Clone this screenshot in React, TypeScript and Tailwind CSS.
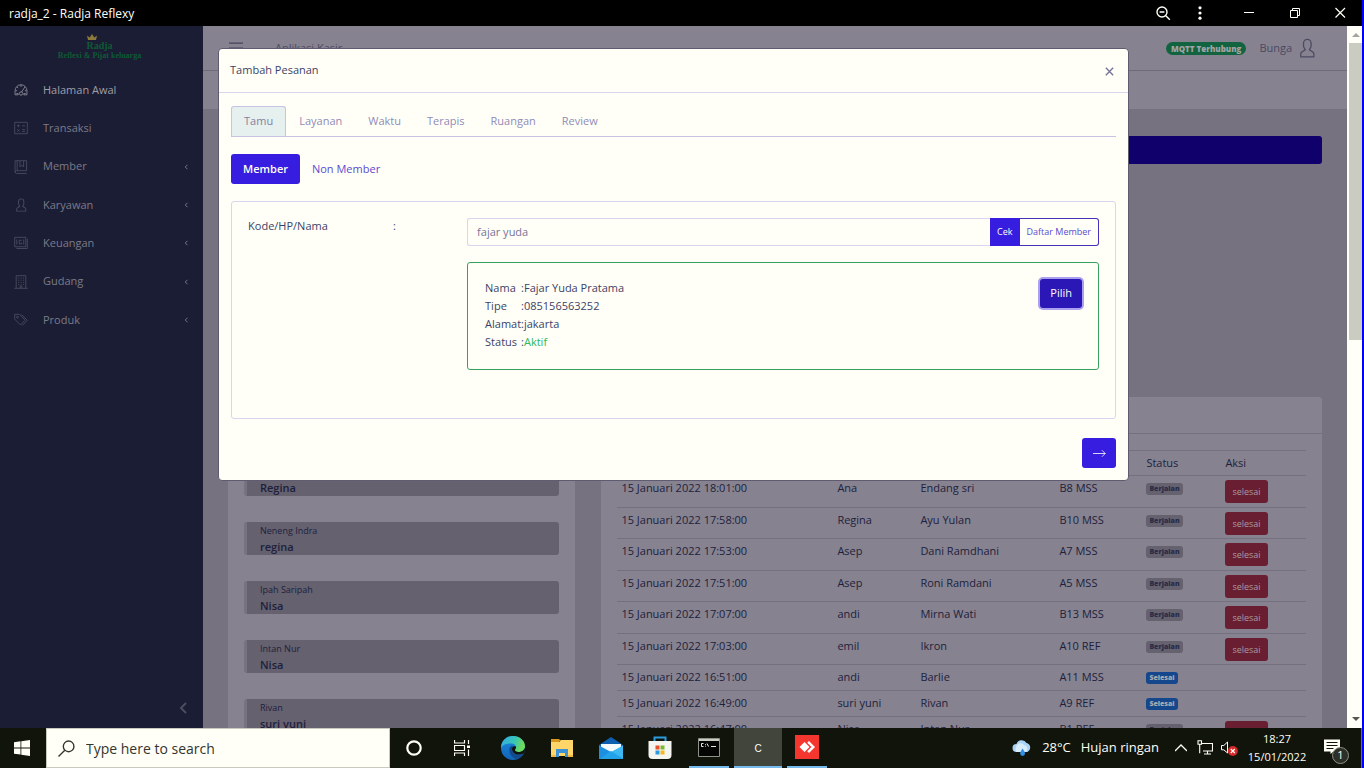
import React from 'react';

type IconProps = { className?: string };
type Size = { className?: string; children: React.ReactNode };

const Line = ({ className, children }: Size) => (
  <svg viewBox="0 0 16 16" fill="none" stroke="currentColor" className={className} aria-hidden="true">
    {children}
  </svg>
);

const Gauge = ({ className }: IconProps) => (
  <Line className={className}>
    <path d="M1.2 13.5V8.8a6.8 6.8 0 0 1 13.6 0v4.7h-3.6v-1.4h2.2" />
    <path d="M1.2 13.5h3.6v-1.4H2.6M8 2v2.5M3.4 4.4l1.4 1.5M1.6 8.8h2M12.4 8.8h2M12.6 4.4 8.6 10.3" />
    <circle cx="8" cy="12" r="1.9" />
  </Line>
);
const Calculator = ({ className }: IconProps) => (
  <Line className={className}>
    <path d="M.8 1.5h14.4v13H.8zM3.5 5.5h3M5 4v3M9.3 5.5h3.2M3.8 9.6l2.4 2.4M6.2 9.6 3.8 12M9.3 9.8h3.2M9.3 11.9h3.2" />
  </Line>
);
const Book = ({ className }: IconProps) => (
  <Line className={className}>
    <path d="M1.2.8h13.2v11.4H3a1.6 1.6 0 0 0 0 3.2h11.6M1.2 1v13M3.6 1v11M6.8 1v6.8L8.9 6l2.1 1.8V1" />
  </Line>
);
const User = ({ className }: IconProps) => (
  <svg viewBox="0 0 512 512" fill="currentColor" className={className} aria-hidden="true">
    <path d="M411.6 343.656l-72.823-47.334 27.455-50.334A80.23 80.23 0 0 0 376 207.681V128a112 112 0 0 0-224 0v79.681a80.236 80.236 0 0 0 9.768 38.308l27.455 50.333L116.4 343.656A79.725 79.725 0 0 0 80 410.732V496h368v-85.268a79.727 79.727 0 0 0-36.4-67.076zM416 464H112v-53.268a47.836 47.836 0 0 1 21.841-40.246l97.66-63.479-41.64-76.341A48.146 48.146 0 0 1 184 207.681V128a80 80 0 0 1 160 0v79.681a48.146 48.146 0 0 1-5.861 22.985L296.5 307.007l97.662 63.479A47.836 47.836 0 0 1 416 410.732z" />
  </svg>
);
const Cash = ({ className }: IconProps) => (
  <Line className={className}>
    <path d="M.8 1.5h12.7v10.8H.8zM2.8 14.3h12.4V3.3M3.2 4v5.800M11.100 4v5.800M8.8 4.900H6v4.200h2.800V7.500" />
  </Line>
);
const Building = ({ className }: IconProps) => (
  <Line className={className}>
    <path d="M2.5 15V.8h11V15M.5 15.2h15M7 15v-2.5h2V15" />
    <path d="M4.8 3.5h6.6M4.8 6h6.6M4.8 8.5h6.6M4.8 11h6.6" strokeDasharray="1.2 1.5" />
  </Line>
);
const Tags = ({ className }: IconProps) => (
  <Line className={className}>
    <path d="M.8 1.5h5.5l6.4 6.7-5.3 5.5L.8 7zM8.6 1.6l6.6 6.8-5.7 5.9" />
    <circle cx="4" cy="4.8" r="1.1" />
  </Line>
);

const menu = [
  { label: 'Halaman Awal', Icon: Gauge, active: true, nested: false },
  { label: 'Transaksi', Icon: Calculator, active: false, nested: false },
  { label: 'Member', Icon: Book, active: false, nested: true },
  { label: 'Karyawan', Icon: User, active: false, nested: true },
  { label: 'Keuangan', Icon: Cash, active: false, nested: true },
  { label: 'Gudang', Icon: Building, active: false, nested: true },
  { label: 'Produk', Icon: Tags, active: false, nested: true },
];

const queue = [
  { guest: '', therapist: 'Regina' },
  { guest: 'Neneng Indra', therapist: 'regina' },
  { guest: 'Ipah Saripah', therapist: 'Nisa' },
  { guest: 'Intan Nur', therapist: 'Nisa' },
  { guest: 'Rivan', therapist: 'suri yuni' },
];

const orders = [
  ['15 Januari 2022 18:01:00', 'Ana', 'Endang sri', 'B8 MSS', 'Berjalan'],
  ['15 Januari 2022 17:58:00', 'Regina', 'Ayu Yulan', 'B10 MSS', 'Berjalan'],
  ['15 Januari 2022 17:53:00', 'Asep', 'Dani Ramdhani', 'A7 MSS', 'Berjalan'],
  ['15 Januari 2022 17:51:00', 'Asep', 'Roni Ramdani', 'A5 MSS', 'Berjalan'],
  ['15 Januari 2022 17:07:00', 'andi', 'Mirna Wati', 'B13 MSS', 'Berjalan'],
  ['15 Januari 2022 17:03:00', 'emil', 'Ikron', 'A10 REF', 'Berjalan'],
  ['15 Januari 2022 16:51:00', 'andi', 'Barlie', 'A11 MSS', 'Selesai'],
  ['15 Januari 2022 16:49:00', 'suri yuni', 'Rivan', 'A9 REF', 'Selesai'],
  ['15 Januari 2022 16:47:00', 'Nisa', 'Intan Nur', 'B1 REF', 'Berjalan'],
];

const tabs = ['Tamu', 'Layanan', 'Waktu', 'Terapis', 'Ruangan', 'Review'];

function TitleBar() {
  return (
    <header className="flex h-[26px] shrink-0 items-center bg-black pl-[9px] text-[#fffff7]">
      <h1 className="grow pt-px text-[12px]">radja_2 - Radja Reflexy</h1>
      <button aria-label="Zoom" className="flex w-10 justify-center">
        <Line className="size-4">
          <circle cx="7" cy="7" r="5" strokeWidth="1.4" />
          <path d="M4.6 7h4.8M10.8 10.8l4 4" strokeWidth="1.4" />
        </Line>
      </button>
      <button aria-label="Menu" className="flex w-[34px] justify-center">
        <svg viewBox="0 0 16 16" fill="currentColor" className="size-4" aria-hidden="true">
          <circle cx="8" cy="2.8" r="1.6" /><circle cx="8" cy="8" r="1.6" /><circle cx="8" cy="13.2" r="1.6" />
        </svg>
      </button>
      <button aria-label="Minimize" className="ml-[9px] flex w-[46px] justify-center">
        <Line className="size-4"><path d="M3 7.5h10" /></Line>
      </button>
      <button aria-label="Restore" className="flex w-[46px] justify-center">
        <Line className="size-4"><path d="M3.5 5.500h7v7h-7zM5.500 5.500v-2h7v7h-2" /></Line>
      </button>
      <button aria-label="Close" className="flex w-11 justify-center">
        <Line className="size-4"><path d="m3.500 3 9.500 9.500M13 3 3.500 12.500" strokeWidth="1.2" /></Line>
      </button>
    </header>
  );
}

function Sidebar() {
  return (
    <aside className="flex w-[203px] shrink-0 flex-col bg-[#1b1d34] text-[#7b7b87]">
      <div className="flex h-[45px] flex-col items-center pt-2 pr-1 font-['Liberation_Serif',serif] text-[#0f5a35]">
        <svg viewBox="0 0 10 6" className="h-[6px] w-[10px] -translate-x-2" fill="#8a7a3c" aria-hidden="true">
          <path d="M1 6 0 1.500l2.700 2L5 0l2.300 3.500 2.700-2L9 6z" />
        </svg>
        <span className="text-[10px] leading-[11px] font-bold">Radja</span>
        <span className="text-[8px] leading-[10px] font-bold">Reflexi &amp; Pijat keluarga</span>
      </div>
      <nav className="grid h-[268px] shrink-0 grid-rows-7">
        {menu.map(({ label, Icon, active, nested }) => (
          <a key={label} href="#" className={`flex items-center pr-[14px] pl-[14px] text-[11px] ${active ? 'text-[#a09fa8]' : ''}`}>
            <Icon className={`mr-[15px] size-[14px] ${active ? 'text-[#8c8b97]' : 'text-[#4c4d60]'}`} />
            <span className="grow">{label}</span>
            {nested && <Line className="h-2 w-[5px]"><path d="M11 1 4 8l7 7" strokeWidth="3" /></Line>}
          </a>
        ))}
      </nav>
      <button aria-label="Ciutkan menu" className="mt-auto flex h-[40px] items-center justify-end pr-4 text-[#4c4d60]">
        <svg viewBox="0 0 8 12" className="h-3 w-2" fill="none" stroke="currentColor" strokeWidth="2" aria-hidden="true"><path d="M7 1 2 6l5 5" /></svg>
      </button>
    </aside>
  );
}

function Dashboard() {
  return (
    <main className="flex min-w-0 grow flex-col overflow-hidden bg-[#767280] text-[11px] text-[#1d1f3c]">
      <div className="flex h-[45px] shrink-0 items-center border-b border-[#6f6b7a] bg-[#868290] pr-[30px] pl-[26px]">
        <button aria-label="Menu samping" className="mr-8 text-[#45445a]">
          <Line className="size-[14px]"><path d="M0 2.500h16M0 8h16M0 13.500h16" strokeWidth="1.300" /></Line>
        </button>
        <span className="grow text-[#4b4a62]">Aplikasi Kasir</span>
        <span className="mr-[13px] rounded-full bg-[#12633f] px-[5px] text-[8px] leading-[13px] font-extrabold text-[#a3a2a4]">MQTT Terhubung</span>
        <a href="#" className="flex items-center gap-[5px] text-[#4b4a62]">
          Bunga
          <User className="size-5" />
        </a>
      </div>
      <div className="h-[38px] shrink-0 bg-[#868290]" />
      <div className="flex flex-col px-[25px] pt-[27px]">
        <div className="h-7 shrink-0 rounded-[3px] bg-[#10006b]" />
        <div className="mt-[233px] grid grid-cols-12 gap-[26px]">
          <section className="col-span-4 rounded-t-[3px] bg-[#868290] px-4">
            <ul className="flex flex-col gap-[26px] pt-[66px]">
              {queue.map((q, i) => (
                <li key={i} className="flex h-[33px] flex-col justify-end rounded-[3px] border-l-[3px] border-[#767280] bg-[#65616f] pl-[13px]">
                  <span className="text-[9px] leading-[14px]">{q.guest}</span>
                  <strong className="text-[11px] leading-[17px] font-semibold">{q.therapist}</strong>
                </li>
              ))}
            </ul>
          </section>
          <section className="col-span-8 rounded-t-[3px] bg-[#868290]">
            <div className="h-[37px] border-b border-[#737080]" />
            <div className="px-4 pt-4">
              <table className="w-full table-fixed border-collapse text-left">
                <colgroup>
                  <col className="w-[216px]" />
                  <col className="w-[83px]" />
                  <col className="w-[139px]" />
                  <col className="w-[87px]" />
                  <col className="w-[79px]" />
                  <col />
                </colgroup>
                <thead>
                  <tr className="h-[25px] border-y border-[#737080]">
                    <td /><td /><td /><td />
                    <th className="px-1 font-normal">Status</th>
                    <th className="px-1 font-normal">Aksi</th>
                  </tr>
                </thead>
                <tbody>
                  {orders.map(([date, therapist, guest, room, status]) => {
                    const running = status === 'Berjalan';
                    return (
                      <tr key={date} className={`border-b border-[#737080] align-top ${running ? 'odd:h-8 even:h-[31px]' : 'h-[26px]'}`}>
                        {[date, therapist, guest, room].map((cell) => (
                          <td key={cell} className="px-1 pt-1 leading-4 whitespace-nowrap">{cell}</td>
                        ))}
                        <td className="px-1 pt-[7px]">
                          <span className={`block w-fit rounded-[3px] px-[3px] text-[7px] leading-3 font-extrabold ${running ? 'bg-[#65616f] text-[#2a2c48]' : 'bg-[#15478c] text-[#a9a9b0]'}`}>{status}</span>
                        </td>
                        <td className="px-1 pt-1">
                          {running && <button className="block h-[23px] rounded-[3px] bg-[#691e31] px-[7px] text-[9px] text-[#a89ba4]">selesai</button>}
                        </td>
                      </tr>
                    );
                  })}
                </tbody>
              </table>
            </div>
          </section>
        </div>
      </div>
    </main>
  );
}

function OrderDialog() {
  return (
    <div className="absolute inset-0 flex items-start justify-center pt-[22px]">
      <div role="dialog" aria-labelledby="order-title" className="w-full max-w-[911px] rounded-[4px] border border-[#5f5b70] bg-[#fffff7] text-[11px] text-[#3c3f66]">
        <div className="flex h-[44px] items-center justify-between border-b border-[#d8d5ef] px-[11px] pr-[14px]">
          <h2 id="order-title">Tambah Pesanan</h2>
          <button aria-label="Tutup" className="pt-[2px] text-[#77749a]">
            <Line className="size-[9px]"><path d="m1.500 1.500 13 13M14.500 1.500l-13 13" strokeWidth="2.500" /></Line>
          </button>
        </div>
        <div className="px-3 pt-[13px] pb-3">
          <div role="tablist" className="flex h-[31px] border-b border-[#c9c3e3]">
            {tabs.map((t, i) => (
              <button key={t} role="tab" aria-selected={i === 0} className={i === 0 ? 'rounded-t-[3px] border border-b-0 border-[#c9c3e3] bg-[#e5f0ef] px-[12px] text-[#85819f]' : 'px-[13px] text-[#908bb8]'}>{t}</button>
            ))}
          </div>
          <div className="mt-[17px] flex h-[30px]">
            <button className="rounded-[3px] bg-[#371ddf] px-3 font-semibold text-[#fffff7]">Member</button>
            <button className="px-3 text-[#5b4bd0]">Non Member</button>
          </div>
          <div className="mt-[17px] flex h-[218px] items-start rounded-[3px] border border-[#d8d5ef] p-4">
            <label htmlFor="member-search" className="w-[145px] leading-4">Kode/HP/Nama</label>
            <span className="w-[74px] leading-4">:</span>
            <div className="min-w-0 grow">
              <div className="flex h-7">
                <input id="member-search" defaultValue="fajar yuda" className="min-w-0 grow rounded-l-[3px] border border-r-0 border-[#d8d5ef] px-[9px] text-[11px] text-[#77749a] outline-none" />
                <button className="bg-[#371ddf] px-[7px] text-[9px] font-medium text-[#fffff7]">Cek</button>
                <button className="rounded-r-[3px] border border-l-0 border-[#4331b8] px-[7px] text-[9px] text-[#5b4bd0]">Daftar Member</button>
              </div>
              <div className="mt-4 flex h-[108px] items-start justify-between rounded-[3px] border border-[#3aa05f] py-4 pr-4 pl-[17px]">
                <dl className="grid grid-cols-[36px_auto] leading-[18px]">
                  <dt>Nama</dt><dd>:Fajar Yuda Pratama</dd>
                  <dt>Tipe</dt><dd>:085156563252</dd>
                  <dt>Alamat</dt><dd>:jakarta</dd>
                  <dt>Status</dt><dd>:<span className="text-[#2eb85c]">Aktif</span></dd>
                </dl>
                <button className="h-[29px] rounded-[3px] bg-[#2a17b5] px-[10px] font-medium text-[#fffff7] ring-2 ring-[#aaa0ee]">Pilih</button>
              </div>
            </div>
          </div>
          <div className="mt-[19px] flex justify-end">
            <button aria-label="Berikutnya" className="flex h-[30px] w-[34px] items-center justify-center rounded-[3px] bg-[#371ddf] text-[#fffff7]">
              <Line className="size-[13px]"><path d="M0 8h15M11 4l4 4-4 4" /></Line>
            </button>
          </div>
        </div>
      </div>
    </div>
  );
}

function ScrollBar() {
  return (
    <div className="flex w-[15px] shrink-0 flex-col items-center bg-[#fffff7] pl-[2px]">
      <svg viewBox="0 0 8 4" className="mt-[7px] mb-[6px] h-1 w-2" fill="#a4a59c" aria-hidden="true"><path d="M0 4 4 0l4 4z" /></svg>
      <div className="h-[297px] w-full bg-[#caccc2]" />
      <svg viewBox="0 0 8 4" className="mt-auto mb-[7px] h-1 w-2" fill="#55564f" aria-hidden="true"><path d="M0 0h8L4 4z" /></svg>
    </div>
  );
}

function TaskBar() {
  return (
    <footer className="flex h-10 shrink-0 items-stretch bg-[#11140b] text-[#fffff7]">
      <button aria-label="Start" className="flex w-[46px] items-center justify-center pr-[2px]">
        <svg viewBox="0 0 16 16" className="size-4" fill="currentColor" aria-hidden="true"><path d="M0 2.200 6.500 1.300v6.200H0zM7.300 1.200 16 0v7.500H7.300zM0 8.400h6.500v6.200L0 13.700zM7.300 8.400H16V16l-8.700-1.200z" /></svg>
      </button>
      <label className="flex w-[344px] items-center border border-[#c8cabd] bg-[#fffff7] pl-[11px] text-[#33352e]">
        <Line className="mr-[11px] size-[17px]"><circle cx="10" cy="6" r="5" strokeWidth="1.300" /><path d="M6.400 9.600.5 15.500" strokeWidth="1.300" /></Line>
        <input aria-label="Search" placeholder="Type here to search" className="min-w-0 grow text-[14px] outline-none placeholder:text-[#33352e]" />
      </label>
      <button aria-label="Cortana" className="flex w-12 items-center justify-center">
        <Line className="size-4"><circle cx="8" cy="8" r="6.700" strokeWidth="2.200" /></Line>
      </button>
      <button aria-label="Task View" className="flex w-12 items-center justify-center">
        <Line className="size-4"><path d="M.5 0v3h10V0M.5 16v-3h10v3M.5 5.500h10v5H.5zM14.500 0v4M14.500 9.500V16" strokeWidth="1.200" /><path d="M13 5.500h3v2.500h-3z" fill="currentColor" stroke="none" /></Line>
      </button>
      <div className="ml-[3px] flex gap-px">
        <button aria-label="Edge" className="flex w-12 items-center justify-center">
          <svg viewBox="0 0 24 24" className="size-6" aria-hidden="true">
            <defs>
              <linearGradient id="edge-top" x1="0" y1="0" x2="1" y2=".3"><stop stopColor="#35a8e8" /><stop offset=".6" stopColor="#37c6b5" /><stop offset="1" stopColor="#6fdc58" /></linearGradient>
              <linearGradient id="edge-low" x1="0" y1="0" x2="0" y2="1"><stop stopColor="#1b8be0" /><stop offset="1" stopColor="#1163b8" /></linearGradient>
            </defs>
            <circle cx="12" cy="12" r="12" fill="url(#edge-low)" />
            <path d="M0 12C0 5 5.500 0 12 0c7 0 12 5 12 10 0 4-3 6-6.500 6-3 0-4-1.200-3.500-2.200C15.500 11.500 15 8 11 7.500 6 7 1 9 0 12z" fill="url(#edge-top)" />
            <path d="M8.500 12.500c-1 5 3 10 8 10.600 3-1.200 5-3.300 6-5.600-5 2.500-11.500 1-11.500-4.500 0-1.500.5-2.500 1.300-3.300-2 0-3.500 1-3.800 2.800z" fill="#124a8c" />
            <path d="M15 10.500c.3 2-1 2.500-1 3.600 0 1.500 2.500 2.200 4.500 1.800 2.500-.4 4.500-1.900 5.300-4 .3 1.800 0 4.100-1.300 5.600-5 2.300-11.500.5-11.500-4.500 0-1.500 1-3.500 4-2.500z" fill="#11140b" />
          </svg>
        </button>
        <button aria-label="File Explorer" className="flex w-12 items-center justify-center">
          <svg viewBox="0 0 22 18" className="h-[18px] w-[22px]" aria-hidden="true">
            <path d="M0 0h8l2 2h-2v4H0z" fill="#d89a1e" /><path d="M0 3h8l2-2h12v16H0z" fill="#ffd667" /><path d="M5 10h12v8h-3v-4H8v4H5z" fill="#3e93d6" /><path d="M0 16h5v2H0zM17 16h5v2h-5z" fill="#f2b83c" />
          </svg>
        </button>
        <button aria-label="Mail" className="flex w-12 items-center justify-center">
          <svg viewBox="0 0 24 22" className="h-[22px] w-6" aria-hidden="true">
            <path d="M0 8 12 0l12 8v14H0z" fill="#0f5fb0" /><path d="M2 7h20v9H2z" fill="#f4fbff" /><path d="M0 8.500 12 15 0 22z" fill="#1d8fe0" /><path d="M24 8.500 12 15l12 7z" fill="#3db8f2" /><path d="M0 22 12 14l12 8z" fill="#22a2e8" />
          </svg>
        </button>
        <button aria-label="Microsoft Store" className="flex w-12 items-center justify-center">
          <svg viewBox="0 0 24 24" className="size-6" aria-hidden="true">
            <path d="M6.500 6V1.500h11V6" fill="none" stroke="#2b9be0" strokeWidth="2" /><path d="M.5 5h23v14a4 4 0 0 1-4 4h-15a4 4 0 0 1-4-4z" fill="#f4f5f0" />
            <path d="M7.500 9.500h4v4h-4z" fill="#e8502e" /><path d="M12.500 9.500h4v4h-4z" fill="#7eb72c" /><path d="M7.500 14.500h4v4h-4z" fill="#2b9be0" /><path d="M12.500 14.500h4v4h-4z" fill="#f4b827" />
          </svg>
        </button>
        <button aria-label="Command Prompt" className="flex w-12 items-center justify-center">
          <span className="flex h-10 w-10 items-center justify-center border-b-2 border-[#76b9ed] pt-px">
            <svg viewBox="0 0 22 19" className="h-[19px] w-[22px]" aria-hidden="true">
              <path d="M.5.500h21v18H.5z" fill="#050604" stroke="#8e9288" /><path d="M1 1h20v2H1z" fill="#c9cdc4" />
              <path d="M5.500 5.500H3.500v3h2M7.500 6v.8M7.500 7.800v.8M9 5.500l1.500 3M13 8.500h5" stroke="#fff" fill="none" strokeWidth=".9" />
            </svg>
          </span>
        </button>
        <button className="flex w-12 items-center justify-center border-b-2 border-[#76b9ed] bg-[#42453c] pt-[2px] font-['Liberation_Sans',sans-serif] text-[10px]">C</button>
        <button aria-label="AnyDesk" className="flex w-12 items-center justify-center">
          <span className="flex h-10 w-10 items-center justify-center border-b-2 border-[#76b9ed]">
            <svg viewBox="0 0 24 24" className="size-6" aria-hidden="true"><path d="M0 0h24v24H0z" fill="#f5362f" /><path d="m4.500 12 5-5 5 5-5 5z" fill="#fff" /><path d="m12.200 7.700 1.800-1.700 6 6-6 6-1.800-1.700 4.300-4.300z" fill="#fff" /></svg>
          </span>
        </button>
      </div>
      <div className="ml-auto flex items-center">
        <button className="flex items-center text-[13px]">
          <svg viewBox="0 0 20 16" className="mr-[10px] h-4 w-5" aria-hidden="true">
            <path d="M4.500 12a4 4 0 0 1 0-8 5.500 5.500 0 0 1 10-1 4.800 4.800 0 0 1 1 9z" fill="#a9d4f5" /><path d="M4 8a4.500 4.500 0 0 1 8-3 4 4 0 0 1 2 7H4.500a3 3 0 0 1-.5-4z" fill="#d9ecfb" /><path d="M10.500 8.500c1.500 2 2.500 3.500 2.500 5a2.400 2.400 0 0 1-4.800 0c0-1.500 1-3 2.300-5z" fill="#2f8fe0" />
          </svg>
          <span className="mr-[10px]">28°C</span>
          <span>Hujan ringan</span>
        </button>
        <button aria-label="Show hidden icons" className="ml-4"><Line className="size-3"><path d="m0 12 8-8 8 8" strokeWidth="1.700" /></Line></button>
        <Line className="ml-[10px] size-4"><path d="M4 3.500h11.500v7.500H6M1 .8h3.500v3.500H1zM2.700 4.300v9M7 14h7M10.500 11v3" strokeWidth="1.100" /></Line>
        <svg viewBox="0 0 17 16" className="ml-2 h-4 w-[17px]" aria-hidden="true">
          <path d="M.5 5.500h2.300L6.500 2v11L2.800 9.800H.5z" fill="none" stroke="#fff" /><circle cx="11.800" cy="11" r="5" fill="#d42a2a" /><path d="m9.800 9 4 4M13.800 9l-4 4" stroke="#fff" strokeWidth="1.200" />
        </svg>
        <div className="ml-[9px] w-[60px] text-center text-[11px] leading-[18px]">
          <div>18:27</div>
          <div>15/01/2022</div>
        </div>
        <button aria-label="Notifications" className="relative mr-[13px] ml-[17px] size-6">
          <svg viewBox="0 0 24 24" className="size-6" aria-hidden="true">
            <path d="M0 3.500h16v12H9.500L6.500 18v-2.500H0z" fill="#fffff7" /><path d="M2.500 6.500h11M2.500 9.500h11M2.500 12.500h7" stroke="#11140b" />
          </svg>
          <span className="absolute -right-px -bottom-1 flex size-[17px] items-center justify-center rounded-full border border-[#8f9189] bg-[#2c2f27] text-[11px]">1</span>
        </button>
        <span className="h-10 w-px bg-[#6b6e64]" />
      </div>
    </footer>
  );
}

export default function App() {
  return (
    <div className="flex h-screen overflow-hidden font-['Open_Sans','Noto_Sans',sans-serif]">
      <div className="flex min-w-0 grow flex-col">
        <TitleBar />
        <div className="flex min-h-0 grow">
          <div className="relative flex min-w-0 grow overflow-hidden">
            <Sidebar />
            <Dashboard />
            <OrderDialog />
          </div>
          <ScrollBar />
        </div>
        <TaskBar />
      </div>
      <div className="w-[2px] shrink-0 bg-[#0000ff]" />
    </div>
  );
}
